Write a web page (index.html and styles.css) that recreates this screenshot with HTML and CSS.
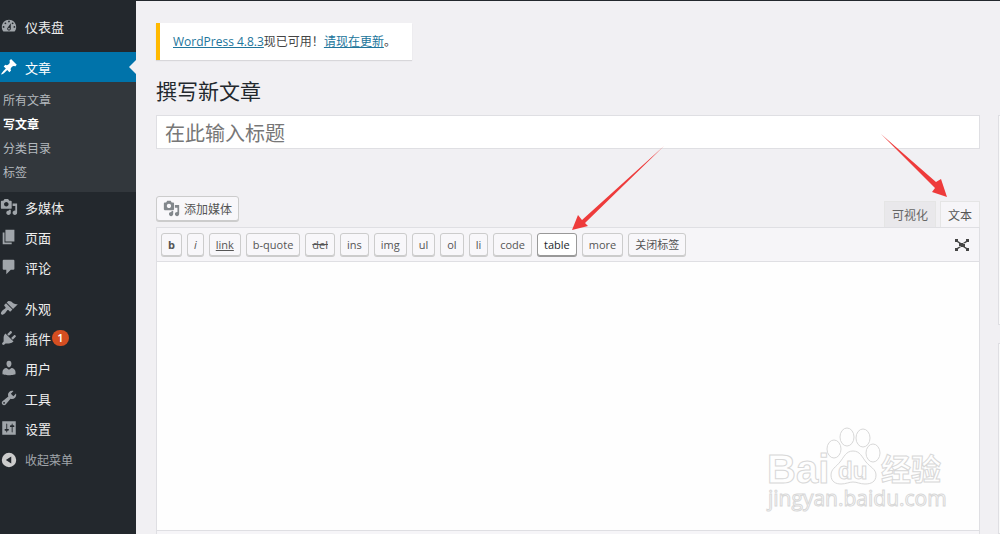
FILE: index.html
```html
<!DOCTYPE html>
<html lang="zh-CN">
  <head>
    <meta charset="UTF-8">
    <meta name="viewport" content="width=device-width, initial-scale=1.0">
    <title>撰写新文章</title>
    <link rel="stylesheet" href="styles.css">
  </head>
  <body>
    <nav class="admin-menu">
      <ul class="menu">
        <li><a href="#" class="menu-item">
          <svg class="icon" viewBox="0 0 20 20"><path d="M3.76 16h12.48c1.1-1.37 1.76-3.11 1.76-5 0-4.42-3.58-8-8-8s-8 3.58-8 8c0 1.89.66 3.63 1.76 5zM10 4c.55 0 1 .45 1 1s-.45 1-1 1-1-.45-1-1 .45-1 1-1zM6 6c.55 0 1 .45 1 1s-.45 1-1 1-1-.45-1-1 .45-1 1-1zm8 0c.55 0 1 .45 1 1s-.45 1-1 1-1-.45-1-1 .45-1 1-1zm-5.37 5.55L12 7v6c0 1.1-.9 2-2 2s-2-.9-2-2c0-.57.24-1.08.63-1.45zM4 10c.55 0 1 .45 1 1s-.45 1-1 1-1-.45-1-1 .45-1 1-1zm12 0c.55 0 1 .45 1 1s-.45 1-1 1-1-.45-1-1 .45-1 1-1zm-5 3c0-.55-.45-1-1-1s-1 .45-1 1 .45 1 1 1 1-.45 1-1z"/></svg>
          仪表盘</a></li>
        <li class="separator"></li>
        <li>
          <a href="#" class="menu-item current">
            <svg class="icon" viewBox="0 0 20 20"><path d="M10.44 3.02l1.82-1.82 6.36 6.35-1.83 1.82c-1.05-.68-2.48-.57-3.41.36l-.75.75c-.92.93-1.04 2.35-.35 3.41l-1.83 1.82-2.41-2.41-2.8 2.79c-.42.42-3.38 2.71-3.8 2.29s1.86-3.39 2.28-3.81l2.79-2.79L4.1 9.36l1.83-1.82c1.05.69 2.48.57 3.4-.36l.75-.75c.93-.92 1.05-2.35.36-3.41z"/></svg>
            文章</a>
          <ul class="submenu">
            <li><a href="#">所有文章</a></li>
            <li><a href="#" class="active">写文章</a></li>
            <li><a href="#">分类目录</a></li>
            <li><a href="#">标签</a></li>
          </ul>
        </li>
        <li><a href="#" class="menu-item">
          <svg class="icon" viewBox="0 0 20 20"><path d="M13 11V4c0-.55-.45-1-1-1h-1.67L9 1H5L3.67 3H2c-.55 0-1 .45-1 1v7c0 .55.45 1 1 1h10c.55 0 1-.45 1-1zM7 4.5c1.38 0 2.5 1.12 2.5 2.5S8.38 9.5 7 9.5 4.5 8.38 4.5 7 5.62 4.5 7 4.5zM14 6h5v10.5c0 1.38-1.12 2.5-2.5 2.5S14 17.88 14 16.5s1.12-2.5 2.5-2.5c.17 0 .34.02.5.05V9h-3V6zm-4 8.05V13h2v3.5c0 1.38-1.12 2.5-2.5 2.5S7 17.88 7 16.5 8.12 14 9.5 14c.17 0 .34.02.5.05z"/></svg>
          多媒体</a></li>
        <li><a href="#" class="menu-item">
          <svg class="icon" viewBox="0 0 20 20"><path d="M6 15V2h10v13H6zm-1 1h8v2H3V5h2v11z"/></svg>
          页面</a></li>
        <li><a href="#" class="menu-item">
          <svg class="icon" viewBox="0 0 20 20"><path d="M4 2h11c.55 0 1 .45 1 1v9c0 .55-.45 1-1 1h-3l-5 5v-5H4c-.55 0-1-.45-1-1V3c0-.55.45-1 1-1z"/></svg>
          评论</a></li>
        <li class="separator"></li>
        <li><a href="#" class="menu-item">
          <svg class="icon" viewBox="0 0 20 20"><path d="M14.48 11.06L7.41 3.99l1.5-1.5c.5-.56 2.3-.47 3.51.32 1.21.8 1.43 1.28 2.91 2.1 1.18.64 2.45 1.26 4.45.85zm-.71.71L6.7 4.7 4.93 6.47c-.39.39-.39 1.02 0 1.41l1.06 1.06c.39.39.39 1.03 0 1.42-.6.6-1.43 1.11-2.21 1.69-.35.26-.7.53-1.01.84C1.43 14.23.4 16.08 1.4 17.07c.99 1 2.84-.03 4.18-1.36.31-.31.58-.66.85-1.02.57-.78 1.08-1.61 1.69-2.21.39-.39 1.02-.39 1.41 0l1.06 1.06c.39.39 1.02.39 1.41 0z"/></svg>
          外观</a></li>
        <li><a href="#" class="menu-item">
          <svg class="icon" viewBox="0 0 20 20"><path d="M13.11 4.36L9.87 7.6 8 5.73l3.24-3.24c.35-.34 1.05-.2 1.56.32.52.51.66 1.21.31 1.55zm-8 1.77l.91-1.12 9.01 9.01-1.19.84c-.71.71-2.63 1.16-3.82 1.16H6.14L4.9 17.26c-.59.59-1.54.59-2.12 0-.59-.58-.59-1.53 0-2.12l1.24-1.24v-3.88c0-1.13.4-3.19 1.09-3.89zm7.26 3.97l3.24-3.24c.34-.35 1.04-.21 1.55.31.52.51.66 1.21.31 1.55l-3.24 3.25z"/></svg>
          插件<span class="count">1</span></a></li>
        <li><a href="#" class="menu-item">
          <svg class="icon" viewBox="0 0 20 20"><path d="M10 9.25c-2.27 0-2.73-3.44-2.73-3.44C7 4.02 7.82 2 9.97 2c2.16 0 2.98 2.02 2.71 3.81 0 0-.41 3.44-2.68 3.44zm0 2.57L12.72 10c2.39 0 4.52 2.33 4.52 4.53v2.49s-3.65 1.13-7.24 1.13c-3.65 0-7.24-1.13-7.24-1.13v-2.49c0-2.25 1.94-4.48 4.47-4.48z"/></svg>
          用户</a></li>
        <li><a href="#" class="menu-item">
          <svg class="icon" viewBox="0 0 20 20"><path d="M16.68 9.77c-1.34 1.34-3.3 1.67-4.95.99l-5.41 6.52c-.99.99-2.59.99-3.58 0s-.99-2.59 0-3.57l6.52-5.42c-.68-1.65-.35-3.61.99-4.95 1.28-1.28 3.12-1.62 4.72-1.06l-2.89 2.89 2.82 2.82 2.86-2.87c.53 1.58.18 3.39-1.08 4.65zM3.81 16.21c.4.39 1.04.39 1.43 0 .4-.4.4-1.04 0-1.43-.39-.4-1.03-.4-1.43 0-.39.39-.39 1.03 0 1.43z"/></svg>
          工具</a></li>
        <li><a href="#" class="menu-item">
          <svg class="icon" viewBox="0 0 20 20"><path fill-rule="evenodd" d="M2.500 2.500h15v15h-15zM8 11h1c.55 0 1 .45 1 1s-.45 1-1 1H8v1.500c0 .28-.22.5-.5.5s-.5-.22-.5-.5V13H6c-.55 0-1-.45-1-1s.45-1 1-1h1V5.500c0-.28.22-.5.5-.5s.5.22.5.5V11zm5-2h-1c-.55 0-1-.45-1-1s.45-1 1-1h1V5.500c0-.28.22-.5.5-.5s.5.22.5.5V7h1c.55 0 1 .45 1 1s-.45 1-1 1h-1v5.500c0 .28-.22.5-.5.5s-.5-.22-.5-.5V9z"/></svg>
          设置</a></li>
        <li><button type="button" class="menu-item collapse">
          <svg class="icon" viewBox="0 0 20 20"><path fill-rule="evenodd" d="M10 2a8 8 0 1 0 0 16a8 8 0 1 0 0-16zM12.500 6v8L6.500 10z"/></svg>
          收起菜单</button></li>
      </ul>
    </nav>

    <main class="content">
      <div class="update-nag"><a href="#">WordPress 4.8.3</a>现已可用！<a href="#">请现在更新</a>。</div>
      <h1>撰写新文章</h1>
      <div class="post-body">
        <section class="post-main">
          <input type="text" class="title-input" aria-label="标题" placeholder="在此输入标题">

          <div class="editor-tools">
            <button type="button" class="button media-button">
              <svg class="icon" viewBox="0 0 20 20"><path d="M13 11V4c0-.55-.45-1-1-1h-1.67L9 1H5L3.67 3H2c-.55 0-1 .45-1 1v7c0 .55.45 1 1 1h10c.55 0 1-.45 1-1zM7 4.5c1.38 0 2.5 1.12 2.5 2.5S8.38 9.5 7 9.5 4.5 8.38 4.5 7 5.62 4.5 7 4.5zM14 6h5v10.5c0 1.38-1.12 2.5-2.5 2.5S14 17.88 14 16.5s1.12-2.5 2.5-2.5c.17 0 .34.02.5.05V9h-3V6zm-4 8.05V13h2v3.5c0 1.38-1.12 2.5-2.5 2.5S7 17.88 7 16.5 8.12 14 9.5 14c.17 0 .34.02.5.05z"/></svg>
              添加媒体
            </button>
            <div class="tabs">
              <button type="button" class="tab">可视化</button>
              <button type="button" class="tab selected">文本</button>
            </div>
          </div>

          <div class="editor">
            <div class="quicktags">
              <button type="button" class="button tag bold">b</button>
              <button type="button" class="button tag italic">i</button>
              <button type="button" class="button tag underline">link</button>
              <button type="button" class="button tag">b-quote</button>
              <button type="button" class="button tag strike">del</button>
              <button type="button" class="button tag">ins</button>
              <button type="button" class="button tag">img</button>
              <button type="button" class="button tag">ul</button>
              <button type="button" class="button tag">ol</button>
              <button type="button" class="button tag">li</button>
              <button type="button" class="button tag">code</button>
              <button type="button" class="button tag focused">table</button>
              <button type="button" class="button tag">more</button>
              <button type="button" class="button tag">关闭标签</button>
              <button type="button" class="fullscreen" aria-label="全屏">
                <svg viewBox="0 0 16 14"><path d="M5 5h6v4H5zM1 1h3v2l3 2-1 1-3-2H1zM15 1h-3v2L9 5l1 1 3-2h2zM1 13h3v-2l3-2-1-1-3 2H1zM15 13h-3v-2L9 9l1-1 3 2h2z"/></svg>
              </button>
            </div>
            <textarea class="editor-text" aria-label="正文"></textarea>
            <div class="status-bar"></div>
          </div>
        </section>
        <aside class="side-boxes">
          <div class="postbox publish"></div>
          <div class="postbox formats"></div>
        </aside>
      </div>

      <!-- pointers to the table button and the text tab -->
      <svg class="pointer pointer-table" viewBox="0 0 94 86"><path d="M93 0L11 74l-4-5-6 15 16-4-3-3z"/></svg>
      <svg class="pointer pointer-text" viewBox="0 0 68 66"><path d="M1 1l55 48 5-3 6 18-15-5 3-4z"/></svg>

      <svg class="watermark" viewBox="0 0 184 90">
        <g class="mark">
          <text x="2" y="57" font-size="40" class="logo">Bai</text>
          <ellipse cx="69" cy="23" rx="7" ry="9"/>
          <ellipse cx="82" cy="11" rx="7" ry="9"/>
          <ellipse cx="98" cy="12" rx="7" ry="9"/>
          <ellipse cx="108" cy="27" rx="7" ry="9"/>
          <path d="M88 25c-7 0-9 6-13 11s-9 7-9 13c0 7 5 9 10 9 5 0 8-2 12-2s7 2 12 2c6 0 11-2 11-9 0-6-6-8-10-13s-6-11-13-11z"/>
          <text x="73" y="53" font-size="24" class="logo">du</text>
          <text x="116" y="54" font-size="30" class="cjk">经验</text>
          <text x="3" y="80" font-size="21" class="address">jingyan.baidu.com</text>
        </g>
      </svg>
    </main>
  </body>
</html>
```
FILE: styles.css
```css
:root {
  --menu-bg: #23282d;
  --submenu-bg: #32373c;
  --highlight: #0073aa;
  --page-bg: #f1f0f3;
  --border: #dfdfe3;
  --toolbar-bg: #f6f5f8;
  --text: #444;
  --font: "Open Sans", "Noto Sans CJK SC", sans-serif;
}

* {
  box-sizing: border-box;
}

body {
  display: flex;
  min-height: 100vh;
  margin: 0;
  border-top: 1px solid #23282d;
  background: var(--page-bg);
  color: var(--text);
  font-family: var(--font);
  font-size: 12px;
}

button,
input,
textarea {
  font-family: inherit;
}

ul {
  margin: 0;
  padding: 0;
  list-style: none;
}

.icon {
  flex: none;
  width: 18px;
  height: 18px;
  fill: #a0a5aa;
}

/* Admin menu */
.admin-menu {
  flex: none;
  width: 136px;
  padding-top: 10px;
  background: var(--menu-bg);
}

.menu-item {
  position: relative;
  display: flex;
  align-items: center;
  gap: 7px;
  width: 100%;
  height: 30px;
  padding: 0;
  border: 0;
  background: none;
  color: #eee;
  font-size: 13px;
  text-decoration: none;
}

.menu-item.current {
  background: var(--highlight);
  color: #fff;
}

.current .icon {
  fill: #fff;
}

.current::after {
  content: "";
  position: absolute;
  right: 0;
  top: 8px;
  border: 7px solid transparent;
  border-left: 0;
  border-right-color: var(--page-bg);
}

.menu-item.collapse {
  margin-top: 2px;
  color: #a0a5aa;
  font-size: 12px;
}

.collapse .icon {
  fill: #ccc;
}

.separator {
  height: 11px;
}

.submenu {
  padding: 7px 3px;
  background: var(--submenu-bg);
}

.submenu a {
  display: block;
  color: #b4b9be;
  line-height: 24px;
  text-decoration: none;
}

.submenu .active {
  color: #fff;
  font-weight: bold;
}

.count {
  width: 17px;
  height: 16px;
  margin-left: -6px;
  border-radius: 8px;
  background: #d54e21;
  color: #fff;
  font-size: 11px;
  font-weight: 600;
  line-height: 16px;
  text-align: center;
}

/* Content */
.content {
  position: relative;
  display: flex;
  flex: 1;
  flex-direction: column;
  align-items: flex-start;
  min-width: 0;
  padding: 22px 0 0 20px;
}

.update-nag {
  padding: 9px 16px 9px 13px;
  border-left: 4px solid #ffb900;
  background: #fff;
  box-shadow: 0 1px 1px rgba(0, 0, 0, 0.1);
  line-height: 19px;
}

.update-nag a {
  color: #21759b;
}

h1 {
  margin: 15px 0 8px;
  color: #23282d;
  font-size: 21px;
  font-weight: 400;
  line-height: 32px;
}

.post-body {
  display: grid;
  flex: 1;
  grid-template-columns: 1fr 2px;
  gap: 18px;
  width: 100%;
}

.post-main {
  display: flex;
  flex-direction: column;
}

.title-input {
  width: 100%;
  height: 34px;
  padding: 2px 8px 0;
  border: 1px solid var(--border);
  background: #fff;
  font-size: 20px;
}

.title-input::placeholder {
  color: #777;
}

.editor-tools {
  display: flex;
  justify-content: space-between;
  align-items: flex-end;
  margin-top: 47px;
}

.button {
  border: 1px solid #ccc;
  border-radius: 3px;
  background: #f8f7fa;
  box-shadow: 0 1px 0 #ccc;
  color: #555;
}

.media-button {
  display: flex;
  align-items: center;
  gap: 4px;
  height: 25px;
  margin-bottom: 6px;
  padding: 0 6px;
  font-size: 12px;
}

.media-button .icon {
  width: 17px;
  height: 17px;
  fill: #82878c;
}

.tabs {
  display: flex;
  gap: 4px;
}

.tab {
  height: 26px;
  padding: 0 7px;
  border: 1px solid #e5e5e5;
  border-bottom: 0;
  background: #e9e8eb;
  color: #666;
  font-size: 12px;
}

.tab.selected {
  z-index: 1;
  margin-bottom: -1px;
  background: var(--toolbar-bg);
  color: #555;
}

.editor {
  display: flex;
  flex: 1;
  flex-direction: column;
  border: 1px solid var(--border);
  border-bottom: 0;
}

.quicktags {
  display: flex;
  flex-wrap: wrap;
  gap: 5px;
  padding: 5px 5px 5px 4px;
  border-bottom: 1px solid var(--border);
  background: var(--toolbar-bg);
}

.tag {
  height: 23px;
  padding: 0 6px;
  font-size: 11px;
  line-height: 21px;
}

.bold {
  font-weight: bold;
}

.italic {
  font-style: italic;
}

.underline {
  text-decoration: underline;
}

.strike {
  text-decoration: line-through;
}

.focused {
  border-color: #999;
  background: #fff;
  box-shadow: 0 1px 0 #999;
  color: #23282d;
}

.fullscreen {
  display: flex;
  align-items: center;
  margin-left: auto;
  padding: 0 4px;
  border: 0;
  background: none;
}

.fullscreen svg {
  width: 16px;
  height: 14px;
  fill: #444;
}

.editor-text {
  flex: 1;
  width: 100%;
  min-height: 200px;
  padding: 10px;
  border: 0;
  background: #fefefe;
  resize: none;
}

.status-bar {
  height: 4px;
  border-top: 1px solid var(--border);
  background: var(--toolbar-bg);
}

.side-boxes {
  display: flex;
  flex-direction: column;
  gap: 18px;
}

.postbox {
  border: 1px solid var(--border);
  border-right: 0;
  background: #fafafa;
}

.publish {
  height: 210px;
}

.formats {
  flex: 1;
}

/* Overlays */
.pointer {
  position: absolute;
  fill: #ee3b3b;
  pointer-events: none;
}

.pointer-table {
  top: 145px;
  left: 435px;
  width: 94px;
  height: 86px;
}

.pointer-text {
  top: 132px;
  right: 52px;
  width: 68px;
  height: 66px;
}

.watermark {
  position: absolute;
  right: 51px;
  bottom: 18px;
  width: 184px;
  height: 90px;
  pointer-events: none;
}

.mark {
  fill: #fefefe;
  stroke: #d8d8d8;
  stroke-width: 1px;
  font-family: "Liberation Sans", Arial, sans-serif;
}

.mark .logo {
  font-weight: bold;
}

.mark .cjk {
  font-family: "Noto Sans CJK SC", sans-serif;
  font-weight: bold;
}

.mark .address {
  font-family: "Open Sans", sans-serif;
}
```
